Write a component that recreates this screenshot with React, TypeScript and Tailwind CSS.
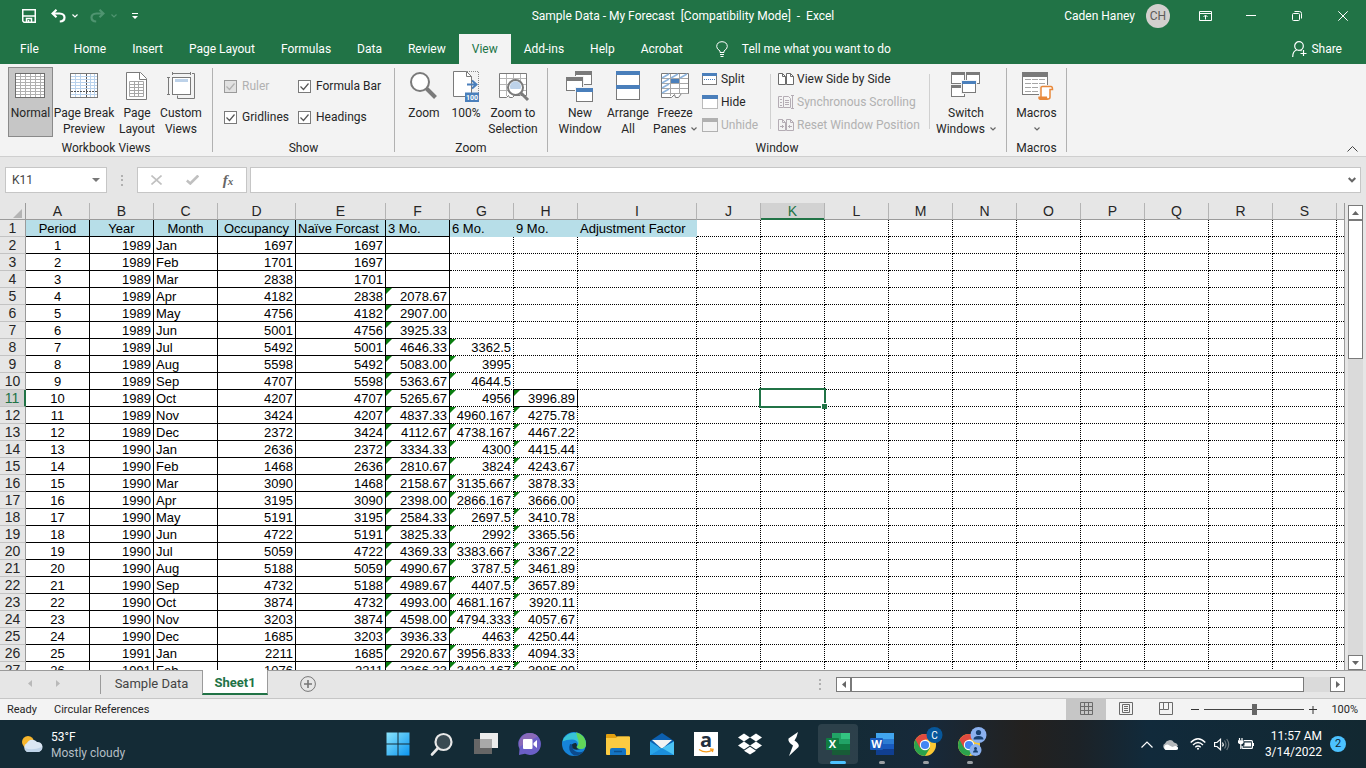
import { useState } from 'react'
import type { ReactNode } from 'react'
import clsx from 'clsx'

interface RibbonButtonProps {
  icon: ReactNode
  lines: string[]
  width: string
  active?: boolean
  menu?: boolean
}

interface DataRow {
  period: number
  year: number
  month: string
  occupancy: number
  naive: number
  avg3?: string
  avg6?: string
  avg9?: string
}

const menuTabs = ['Home', 'Insert', 'Page Layout', 'Formulas', 'Data', 'Review', 'View', 'Add-ins', 'Help', 'Acrobat']

const columns = [
  { name: 'A', width: 'w-[64px]' },
  { name: 'B', width: 'w-[64px]' },
  { name: 'C', width: 'w-[64px]' },
  { name: 'D', width: 'w-[78px]' },
  { name: 'E', width: 'w-[90px]' },
  { name: 'F', width: 'w-[64px]' },
  { name: 'G', width: 'w-[64px]' },
  { name: 'H', width: 'w-[64px]' },
  { name: 'I', width: 'w-[119px]' },
  { name: 'J', width: 'w-[64px]' },
  { name: 'K', width: 'w-[64px]' },
  { name: 'L', width: 'w-[64px]' },
  { name: 'M', width: 'w-[64px]' },
  { name: 'N', width: 'w-[64px]' },
  { name: 'O', width: 'w-[64px]' },
  { name: 'P', width: 'w-[64px]' },
  { name: 'Q', width: 'w-[64px]' },
  { name: 'R', width: 'w-[64px]' },
  { name: 'S', width: 'w-[64px]' },
  { name: '', width: '' },
]

const headings = ['Period', 'Year', 'Month', 'Occupancy', 'Naïve Forcast', '3 Mo.', '6 Mo.', '9 Mo.', 'Adjustment Factor']

const rows: DataRow[] = [
  { period: 1, year: 1989, month: 'Jan', occupancy: 1697, naive: 1697 },
  { period: 2, year: 1989, month: 'Feb', occupancy: 1701, naive: 1697 },
  { period: 3, year: 1989, month: 'Mar', occupancy: 2838, naive: 1701 },
  { period: 4, year: 1989, month: 'Apr', occupancy: 4182, naive: 2838, avg3: '2078.67' },
  { period: 5, year: 1989, month: 'May', occupancy: 4756, naive: 4182, avg3: '2907.00' },
  { period: 6, year: 1989, month: 'Jun', occupancy: 5001, naive: 4756, avg3: '3925.33' },
  { period: 7, year: 1989, month: 'Jul', occupancy: 5492, naive: 5001, avg3: '4646.33', avg6: '3362.5' },
  { period: 8, year: 1989, month: 'Aug', occupancy: 5598, naive: 5492, avg3: '5083.00', avg6: '3995' },
  { period: 9, year: 1989, month: 'Sep', occupancy: 4707, naive: 5598, avg3: '5363.67', avg6: '4644.5' },
  { period: 10, year: 1989, month: 'Oct', occupancy: 4207, naive: 4707, avg3: '5265.67', avg6: '4956', avg9: '3996.89' },
  { period: 11, year: 1989, month: 'Nov', occupancy: 3424, naive: 4207, avg3: '4837.33', avg6: '4960.167', avg9: '4275.78' },
  { period: 12, year: 1989, month: 'Dec', occupancy: 2372, naive: 3424, avg3: '4112.67', avg6: '4738.167', avg9: '4467.22' },
  { period: 13, year: 1990, month: 'Jan', occupancy: 2636, naive: 2372, avg3: '3334.33', avg6: '4300', avg9: '4415.44' },
  { period: 14, year: 1990, month: 'Feb', occupancy: 1468, naive: 2636, avg3: '2810.67', avg6: '3824', avg9: '4243.67' },
  { period: 15, year: 1990, month: 'Mar', occupancy: 3090, naive: 1468, avg3: '2158.67', avg6: '3135.667', avg9: '3878.33' },
  { period: 16, year: 1990, month: 'Apr', occupancy: 3195, naive: 3090, avg3: '2398.00', avg6: '2866.167', avg9: '3666.00' },
  { period: 17, year: 1990, month: 'May', occupancy: 5191, naive: 3195, avg3: '2584.33', avg6: '2697.5', avg9: '3410.78' },
  { period: 18, year: 1990, month: 'Jun', occupancy: 4722, naive: 5191, avg3: '3825.33', avg6: '2992', avg9: '3365.56' },
  { period: 19, year: 1990, month: 'Jul', occupancy: 5059, naive: 4722, avg3: '4369.33', avg6: '3383.667', avg9: '3367.22' },
  { period: 20, year: 1990, month: 'Aug', occupancy: 5188, naive: 5059, avg3: '4990.67', avg6: '3787.5', avg9: '3461.89' },
  { period: 21, year: 1990, month: 'Sep', occupancy: 4732, naive: 5188, avg3: '4989.67', avg6: '4407.5', avg9: '3657.89' },
  { period: 22, year: 1990, month: 'Oct', occupancy: 3874, naive: 4732, avg3: '4993.00', avg6: '4681.167', avg9: '3920.11' },
  { period: 23, year: 1990, month: 'Nov', occupancy: 3203, naive: 3874, avg3: '4598.00', avg6: '4794.333', avg9: '4057.67' },
  { period: 24, year: 1990, month: 'Dec', occupancy: 1685, naive: 3203, avg3: '3936.33', avg6: '4463', avg9: '4250.44' },
  { period: 25, year: 1991, month: 'Jan', occupancy: 2211, naive: 1685, avg3: '2920.67', avg6: '3956.833', avg9: '4094.33' },
  { period: 26, year: 1991, month: 'Feb', occupancy: 1076, naive: 2211, avg3: '2366.33', avg6: '3482.167', avg9: '3985.00' },
]

/* ---------- small shared pieces ---------- */

function Chevron({ className = '' }: { className?: string }) {
  return (
    <svg viewBox="0 0 6 4" className={clsx('w-[6px] h-[4px] shrink-0', className)} fill="none" stroke="currentColor">
      <path d="M.5.5 3 3 5.5.5" strokeWidth="1.2" />
    </svg>
  )
}

function Dots() {
  return (
    <svg viewBox="0 0 2 11" className="w-[2px] h-[11px] shrink-0" fill="#b0b0b0">
      <path d="M0 0h2v2H0zM0 4h2v2H0zM0 9h2v2H0z" />
    </svg>
  )
}

function Svg32({ children }: { children: ReactNode }) {
  return (
    <svg viewBox="0 0 32 32" className="w-8 h-8 shrink-0 overflow-visible" fill="none" aria-hidden="true">
      {children}
    </svg>
  )
}

/* ---------- ribbon icons ---------- */

const NormalIcon = () => (
  <Svg32>
    <rect x=".5" y="3.5" width="29" height="24" fill="#fff" stroke="#6d6d6d" />
    <path d="M1 6.5h28M1 9.5h28M1 12.5h28M1 15.5h28M1 18.5h28M1 21.5h28M1 24.5h28M5.5 4v23M10.5 4v23M15.5 4v23M20.5 4v23M25.5 4v23" stroke="#b0b0b0" />
  </Svg32>
)

const PageBreakIcon = () => (
  <Svg32>
    <rect x="2.5" y="3.5" width="27" height="24" fill="#fff" stroke="#7a7a7a" />
    <path d="M3 6.5h26M3 9.5h26M3 12.5h26M3 15.5h26M3 18.5h26M3 24.5h26M7.5 4v23M12.5 4v23M22.5 4v23M26.5 4v23" stroke="#b9d2ec" />
    <path d="M18.5 4v23M3 21.5h26" stroke="#555" strokeDasharray="2 1" />
  </Svg32>
)

const PageLayoutIcon = () => (
  <Svg32>
    <path d="M5.5 2.5h14l6 6v21h-20z" fill="#fff" stroke="#7a7a7a" />
    <path d="M18.5 2.5v7h7" stroke="#7a7a7a" />
    <path d="M8.5 11.5h14v15h-14zM8.5 14.5h14M8.5 17.5h14M8.5 20.5h14M8.5 23.5h14M13.5 11.5v15M17.5 11.5v15" stroke="#a6a6a6" />
  </Svg32>
)

const CustomViewsIcon = () => (
  <Svg32>
    <rect x="7.5" y="7.5" width="18" height="17" fill="#fff" stroke="#7a7a7a" />
    <rect x="10" y="9" width="13" height="3" fill="#bdd2e9" />
    <path d="M7.5 2v3M25.5 2v3M7.5 3.5h18M2 7.5h3M2 24.5h3M3.5 7.5v17M27 3.5h2.5v25h-17v-3" stroke="#7a7a7a" />
  </Svg32>
)

const ZoomIcon = () => (
  <Svg32>
    <circle cx="12" cy="12" r="9" fill="#fff" stroke="#7a7a7a" strokeWidth="2" />
    <path d="m18.5 18.5 9 9" stroke="#7a7a7a" strokeWidth="4" />
  </Svg32>
)

const HundredIcon = () => (
  <Svg32>
    <path d="M17 1.5h11.500V23" stroke="#8a8a8a" strokeDasharray="1 1" />
    <path d="M3.5 1.5h13l5 5v20h-18z" fill="#fff" stroke="#7a7a7a" />
    <path d="M16.5 1.5v5h5" stroke="#7a7a7a" />
    <path d="M17 14.5h9M22 10.5l4.500 4-4.500 4" stroke="#4a7fbb" strokeWidth="2" />
    <rect x="15" y="22.5" width="14" height="9.5" fill="#4a7fbb" />
    <text x="22" y="30" textAnchor="middle" fontSize="7" fontWeight="700" fill="#fff" fontFamily="Roboto, sans-serif">100</text>
  </Svg32>
)

const ZoomSelectionIcon = () => (
  <Svg32>
    <path d="M2.5 3.5h27v22h-12l-2 2h-3l-1-2-2 2h-7z" fill="#fff" stroke="#7a7a7a" />
    <path d="M9.5 4v22M16.5 4v22M23.5 4v22M3 8.5h26M3 14.5h26M3 20.5h26" stroke="#b4b4b4" />
    <circle cx="18.5" cy="17.5" r="7.5" fill="#fff" stroke="#7a7a7a" strokeWidth="2" />
    <path d="M13.5 19a5.500 5.500 0 1 1 10 0z" fill="#bdd2e9" />
    <path d="m24 23 7 7" stroke="#7a7a7a" strokeWidth="3" />
  </Svg32>
)

interface MiniWindowProps {
  x: number
  y: number
  w: number
  h: number
  color?: string
  bar?: number
}

function MiniWindow({ x, y, w, h, color = '#7a7a7a', bar = 4 }: MiniWindowProps) {
  return (
    <g>
      <rect x={x - 1} y={y - 1} width={w + 2} height={h + 2} fill="#f3f3f3" />
      <rect x={x + 0.5} y={y + 0.5} width={w - 1} height={h - 1} fill="#fff" stroke="#7a7a7a" />
      <rect x={x} y={y} width={w} height={bar} fill={color} />
    </g>
  )
}

const NewWindowIcon = () => (
  <Svg32>
    <MiniWindow x={11} y={1} w={17} h={14} />
    <MiniWindow x={2} y={7} w={17} h={14} />
    <MiniWindow x={12} y={18} w={17} h={14} color="#4a7fbb" />
  </Svg32>
)

const ArrangeIcon = () => (
  <Svg32>
    <rect x="4.5" y="1.5" width="23" height="28" fill="#fff" stroke="#7a7a7a" />
    <path d="M4 1h24v4H4zM4 15h24v4H4z" fill="#4a7fbb" />
  </Svg32>
)

const FreezeIcon = () => (
  <Svg32>
    <path d="M2.5 3.5h27v20h-7l-3 4h-3l-1-3-3 3h-10z" fill="#fff" stroke="#7a7a7a" />
    <path d="M11.5 4v22M20.5 4v20M3 8.5h26M3 13.5h26M3 18.5h26M3 23.5h26" stroke="#a6a6a6" />
    <path d="m3 8 7-4M12 8l7-4M21 8l7-4M3 13l7-4M3 18l7-4M3 23l7-4" stroke="#8db4dd" strokeWidth="1.5" />
    <rect x="12" y="9" width="8" height="4" fill="#4a7fbb" />
  </Svg32>
)

const SwitchIcon = () => (
  <Svg32>
    <MiniWindow x={1} y={2} w={14} h={12} bar={3} />
    <MiniWindow x={16} y={2} w={14} h={12} bar={3} />
    <MiniWindow x={1} y={15} w={14} h={12} bar={3} />
    <MiniWindow x={12} y={11} w={14} h={12} bar={3} color="#4a7fbb" />
  </Svg32>
)

const MacrosIcon = () => (
  <Svg32>
    <MiniWindow x={1} y={2} w={26} h={23} bar={5} />
    <path d="M4 9.5h6M11 9.5h6M18 9.5h6M4 13.5h6M11 13.5h6M18 13.5h6M4 17.5h6M11 17.5h6M4 21.5h6M11 21.5h6" stroke="#a6a6a6" />
    <path d="M19.5 27V16.500h11v3h-1.500V28h-9z" fill="#fff" stroke="#f3f3f3" strokeWidth="3" />
    <path d="M20 27V17.500q0-1 1.500-1H30q1.500 0 1.500 3H29V27q0 2-2 2h-8" fill="#fff" stroke="#e8883a" strokeWidth="1.5" />
    <path d="M17.5 26.5h8.500q0 3 1.500 3.500h-8.500q-2.500-1-1.500-3.500z" fill="#e8883a" />
  </Svg32>
)

const SplitIcon = () => (
  <svg viewBox="0 0 16 14" className="w-4 h-[14px] shrink-0">
    <rect x=".5" y="1.5" width="14" height="11" fill="#fff" stroke="#7a7a7a" />
    <path d="M0 1h15v3H0z" fill="#4a7fbb" />
    <path d="M2 7.5h12" stroke="#4a7fbb" strokeDasharray="1 1" />
  </svg>
)

const HideIcon = () => (
  <svg viewBox="0 0 16 14" className="w-4 h-[14px] shrink-0">
    <rect x=".5" y=".5" width="15" height="13" fill="#fff" stroke="#7a7a7a" strokeDasharray="1 1" />
    <path d="M0 0h16v4H0z" fill="#4a7fbb" />
  </svg>
)

const UnhideIcon = () => (
  <svg viewBox="0 0 16 14" className="w-4 h-[14px] shrink-0">
    <rect x=".5" y=".5" width="15" height="13" fill="#f3f3f3" stroke="#b1b1b1" />
    <path d="M0 0h16v4H0z" fill="#b1b1b1" />
  </svg>
)

const SideBySideIcon = () => (
  <svg viewBox="0 0 16 12" className="w-4 h-3 shrink-0" fill="#fff" stroke="#6a6a6a">
    <path d="M.5.5h4l3 3v8h-7zM8.5.5h4l3 3v8h-7z" />
    <path d="M4.5.5v3h3M12.5.5v3h3" fill="none" />
  </svg>
)

const SyncScrollIcon = () => (
  <svg viewBox="0 0 16 14" className="w-4 h-[14px] shrink-0" fill="none" stroke="#b4acb4">
    <path d="M4 1.5H.5v11H5M5.5 1.5h5l2 2v9h-7z" />
    <path d="M2 4.5h2M2 7.5h2M2 10.5h2M7 5.5h4M7 7.5h4M7 9.5h4M14.5.5v13M13 .5h3M13 13.5h3" />
  </svg>
)

const ResetPositionIcon = () => (
  <svg viewBox="0 0 16 12" className="w-4 h-3 shrink-0" fill="none" stroke="#b4acb4">
    <path d="M.5.5h4l3 3v8h-7zM8.5.5h4l3 3v8h-7zM4.5.5v3h3M12.5.5v3h3" />
    <path d="M2 7.5h4M4.500 6v3M10 7.5h4M11.5 6v3" />
  </svg>
)

/* ---------- title bar and tabs ---------- */

function TitleBar() {
  return (
    <div className="grid grid-cols-[1fr_auto_1fr] items-center h-[34px] pb-[3px] text-white">
      <div className="flex items-center pl-[22px]">
        <button aria-label="Save" className="mr-[15px]">
          <svg viewBox="0 0 14 14" className="w-[14px] h-[14px]" fill="none" stroke="#fff" strokeWidth="1.5">
            <path d="M.75.75h12.500v12.500H2L.75 12z" />
            <path d="M1 7h12M4.500 13v-3.500h5V13" />
            <path d="M6.500 11v2" />
          </svg>
        </button>
        <button aria-label="Undo" className="mr-[6px]">
          <svg viewBox="0 0 15 14" className="w-[15px] h-[14px]" fill="none" stroke="#fff" strokeWidth="2.200">
            <path d="M5.500.8 1.500 4.500l4 3.700M2 4.500h6.500q5 .3 5 4 0 3.800-4.700 4" />
          </svg>
        </button>
        <Chevron className="mr-[12px]" />
        <button aria-label="Redo" className="mr-[6px] text-[#4f9470]" disabled>
          <svg viewBox="0 0 15 14" className="w-[15px] h-[14px]" fill="none" stroke="currentColor" strokeWidth="2.200">
            <path d="M9.500.8l4 3.700-4 3.700M13 4.500H6.500q-5 .3-5 4 0 3.800 4.700 4" />
          </svg>
        </button>
        <Chevron className="mr-[15px] text-[#4f9470]" />
        <button aria-label="Customize Quick Access Toolbar">
          <svg viewBox="0 0 6 6" className="w-[6px] h-[6px]" fill="#fff">
            <path d="M0 0h6v1H0zM0 3h6L3 6z" />
          </svg>
        </button>
      </div>
      <h1 className="whitespace-pre">{'Sample Data - My Forecast  [Compatibility Mode]  -  Excel'}</h1>
      <div className="flex items-center justify-end">
        <span className="mr-[11px]">Caden Haney</span>
        <span className="w-6 h-6 mr-[12px] rounded-full bg-[#d2d0ce] text-[#5d5b59] flex items-center justify-center">CH</span>
        <button aria-label="Ribbon Display Options" className="w-[46px] flex justify-center">
          <svg viewBox="0 0 13 10" className="w-[13px] h-[10px]" fill="none" stroke="#fff">
            <path d="M.5.5h12v9H.5zM.5 2.500h12M6.500 8.500v-4M4.500 6l2-2 2 2" />
          </svg>
        </button>
        <button aria-label="Minimize" className="w-[46px] flex justify-center">
          <svg viewBox="0 0 10 10" className="w-[10px] h-[10px]" stroke="#fff">
            <path d="M0 4.500h10" />
          </svg>
        </button>
        <button aria-label="Restore" className="w-[46px] flex justify-center">
          <svg viewBox="0 0 10 10" className="w-[10px] h-[10px]" fill="none" stroke="#fff">
            <rect x=".5" y="2.5" width="7" height="7" rx="1" />
            <path d="M2.500.5h5q2 0 2 2v5" />
          </svg>
        </button>
        <button aria-label="Close" className="w-[46px] flex justify-center">
          <svg viewBox="0 0 10 10" className="w-[10px] h-[10px]" stroke="#fff">
            <path d="m.3.3 9.400 9.400M9.700.3.300 9.700" />
          </svg>
        </button>
      </div>
    </div>
  )
}

function TabBar() {
  const [current, setCurrent] = useState('View')
  return (
    <nav className="flex h-[30px] text-white">
      <button className="pl-5 pr-[22px]">File</button>
      {menuTabs.map((tab) => (
        <button
          key={tab}
          onClick={() => setCurrent(tab)}
          className={clsx('px-[13px]', tab === current && 'bg-[#f3f3f3] text-[#217346]')}
        >
          {tab}
        </button>
      ))}
      <button className="flex items-center gap-[14px] pl-5">
        <svg viewBox="0 0 12 16" className="w-3 h-4" fill="none" stroke="#fff">
          <path d="M4 11.500V10Q.7 8 .7 5.500.9.900 6 .7q5.100.2 5.300 4.800Q11.300 8 8 10v1.500zM4 13.500h4M4.500 15.500h3" />
        </svg>
        Tell me what you want to do
      </button>
      <button className="ml-auto pr-6 flex items-center gap-1">
        <svg viewBox="0 0 15 16" className="w-[15px] h-4" fill="none" stroke="#fff" strokeWidth="1.200">
          <circle cx="7" cy="5" r="4.300" />
          <path d="M.7 16q0-6 4-7M8.500 9.300l1 .7M11.500 9v6M8.500 12.500h6" />
        </svg>
        Share
      </button>
    </nav>
  )
}

/* ---------- ribbon ---------- */

function RibbonButton({ icon, lines, width, active, menu }: RibbonButtonProps) {
  return (
    <button
      className={clsx(
        'h-[70px] flex flex-col items-center pt-[2px] gap-[3px] border leading-4 whitespace-nowrap',
        width,
        active ? 'bg-[#c6c6c6] border-[#8a8a8a]' : 'border-transparent',
      )}
    >
      {icon}
      <span className="flex flex-col items-center">
        {lines.map((line, i) => (
          <span key={line} className="flex items-center gap-[5px]">
            {line}
            {menu && i === lines.length - 1 && lines.length > 1 && <Chevron className="text-[#666]" />}
          </span>
        ))}
        {menu && lines.length === 1 && <Chevron className="mt-[6px] text-[#666]" />}
      </span>
    </button>
  )
}

function RibbonGroup({ label, className, children }: { label: string; className?: string; children: ReactNode }) {
  return (
    <section className="flex flex-col pt-[3px]">
      <div className={clsx('flex h-[73px]', className)}>{children}</div>
      <h2 className="h-4 leading-4 text-center">{label}</h2>
    </section>
  )
}

const GroupDivider = () => <div className="w-px h-[84px] mt-1 bg-[#b1b1b1]" />
const InnerDivider = () => <div className="w-px h-[55px] mt-[7px] bg-[#d0d0d0]" />

function CheckOption({ label, disabled }: { label: string; disabled?: boolean }) {
  return (
    <label className={clsx('flex items-center gap-[5px] h-4', disabled && 'text-[#b1b1b1]')}>
      <span className="grid w-[13px] h-[13px]">
        <input
          type="checkbox"
          defaultChecked
          disabled={disabled}
          className="peer col-start-1 row-start-1 appearance-none w-[13px] h-[13px] border border-[#7a7a7a] bg-white disabled:bg-[#e1e1e1] disabled:border-[#9a9a9a]"
        />
        <svg
          viewBox="0 0 13 13"
          className="col-start-1 row-start-1 pointer-events-none hidden peer-checked:block"
          fill="none"
          stroke={disabled ? '#b1b1b1' : '#555'}
          strokeWidth="1.200"
        >
          <path d="m2.500 6.500 3 3 5-6" />
        </svg>
      </span>
      {label}
    </label>
  )
}

function SmallCommand({ icon, label, disabled }: { icon: ReactNode; label: string; disabled?: boolean }) {
  return (
    <button disabled={disabled} className={clsx('flex items-center gap-[3px] h-[23px] whitespace-nowrap', disabled && 'text-[#b1b1b1]')}>
      {icon}
      {label}
    </button>
  )
}

function Ribbon() {
  return (
    <div className="flex h-[93px] bg-[#f3f3f3] border-b border-[#cfcfcf] text-[#262626]">
      <RibbonGroup label="Workbook Views" className="pl-2 pr-[9px]">
        <RibbonButton icon={<NormalIcon />} lines={['Normal']} width="w-[45px]" active />
        <RibbonButton icon={<PageBreakIcon />} lines={['Page Break', 'Preview']} width="w-[62px]" />
        <RibbonButton icon={<PageLayoutIcon />} lines={['Page', 'Layout']} width="w-[44px]" />
        <RibbonButton icon={<CustomViewsIcon />} lines={['Custom', 'Views']} width="w-[44px]" />
      </RibbonGroup>
      <GroupDivider />
      <RibbonGroup label="Show" className="pl-[11px] w-[181px]">
        <div className="flex flex-col gap-[15px] pt-[11px] w-[74px]">
          <CheckOption label="Ruler" disabled />
          <CheckOption label="Gridlines" />
        </div>
        <div className="flex flex-col gap-[15px] pt-[11px]">
          <CheckOption label="Formula Bar" />
          <CheckOption label="Headings" />
        </div>
      </RibbonGroup>
      <GroupDivider />
      <RibbonGroup label="Zoom" className="px-[6px]">
        <RibbonButton icon={<ZoomIcon />} lines={['Zoom']} width="w-[46px]" />
        <RibbonButton icon={<HundredIcon />} lines={['100%']} width="w-[38px]" />
        <RibbonButton icon={<ZoomSelectionIcon />} lines={['Zoom to', 'Selection']} width="w-[56px]" />
      </RibbonGroup>
      <GroupDivider />
      <RibbonGroup label="Window" className="pl-2 w-[458px]">
        <RibbonButton icon={<NewWindowIcon />} lines={['New', 'Window']} width="w-[48px]" />
        <RibbonButton icon={<ArrangeIcon />} lines={['Arrange', 'All']} width="w-[48px]" />
        <RibbonButton icon={<FreezeIcon />} lines={['Freeze', 'Panes']} width="w-[46px]" menu />
        <div className="flex flex-col pl-1 w-[72px]">
          <SmallCommand icon={<SplitIcon />} label="Split" />
          <SmallCommand icon={<HideIcon />} label="Hide" />
          <SmallCommand icon={<UnhideIcon />} label="Unhide" disabled />
        </div>
        <InnerDivider />
        <div className="flex flex-col pl-[7px] w-[158px]">
          <SmallCommand icon={<SideBySideIcon />} label="View Side by Side" />
          <SmallCommand icon={<SyncScrollIcon />} label="Synchronous Scrolling" disabled />
          <SmallCommand icon={<ResetPositionIcon />} label="Reset Window Position" disabled />
        </div>
        <InnerDivider />
        <div className="pl-1">
          <RibbonButton icon={<SwitchIcon />} lines={['Switch', 'Windows']} width="w-[64px]" menu />
        </div>
      </RibbonGroup>
      <GroupDivider />
      <RibbonGroup label="Macros" className="px-[6px]">
        <RibbonButton icon={<MacrosIcon />} lines={['Macros']} width="w-[47px]" menu />
      </RibbonGroup>
      <GroupDivider />
      <button aria-label="Collapse the Ribbon" className="ml-auto mr-2 mb-1 self-end">
        <svg viewBox="0 0 11 6" className="w-[11px] h-[6px]" fill="none" stroke="#444">
          <path d="m.5 5.500 5-5 5 5" />
        </svg>
      </button>
    </div>
  )
}

/* ---------- formula bar ---------- */

function FormulaBar() {
  return (
    <div className="flex items-center h-[46px] pl-[5px] pr-[5px] text-[#444]">
      <div className="flex items-center w-[102px] h-[26px] bg-white border border-[#c6c6c6] pr-[6px]">
        <input aria-label="Name Box" defaultValue="K11" className="w-full min-w-0 pl-[6px] outline-none" />
        <svg viewBox="0 0 8 4" className="w-2 h-1 shrink-0" fill="#777">
          <path d="M0 0h8L4 4z" />
        </svg>
      </div>
      <div className="w-[30px] flex justify-center">
        <Dots />
      </div>
      <div className="flex items-center w-[110px] h-[26px] mr-[3px] bg-white border border-[#c6c6c6]">
        <button aria-label="Cancel" className="w-9 flex justify-center">
          <svg viewBox="0 0 11 10" className="w-[11px] h-[10px]" stroke="#c0c0c0" strokeWidth="1.600">
            <path d="m.5.500 10 9M10.500.5l-10 9" />
          </svg>
        </button>
        <button aria-label="Enter" className="w-9 flex justify-center">
          <svg viewBox="0 0 13 10" className="w-[13px] h-[10px]" fill="none" stroke="#c0c0c0" strokeWidth="2.600">
            <path d="m.8 5.500 3.500 3 8-8" />
          </svg>
        </button>
        <button aria-label="Insert Function" className="w-9 font-['Liberation_Serif',serif] italic font-bold text-[15px] leading-4 text-[#666]">
          f<span className="text-[11px]">x</span>
        </button>
      </div>
      <div className="flex flex-1 items-center h-[26px] bg-white border border-[#c6c6c6] pr-1">
        <input aria-label="Formula Bar" className="flex-1 px-2 outline-none" />
        <svg viewBox="0 0 8 6" className="w-2 h-[6px]" fill="none" stroke="#666" strokeWidth="2">
          <path d="m.7 1 3.300 3.300L7.300 1" />
        </svg>
      </div>
    </div>
  )
}

/* ---------- sheet ---------- */

interface CellProps {
  children?: ReactNode
  solidRight?: boolean
  solidBottom?: boolean
  align?: string
  flag?: boolean
  last?: boolean
}

function Cell({ children, solidRight, solidBottom, align = 'text-right', flag, last }: CellProps) {
  return (
    <td
      className={clsx(
        'relative p-0 px-[2px] pt-px h-[17px] leading-[15px] border-b border-black whitespace-nowrap',
        !last && 'border-r',
        !solidRight && '[border-right-style:dotted]',
        !solidBottom && '[border-bottom-style:dotted]',
        align,
      )}
    >
      {flag && (
        <svg viewBox="0 0 6 6" className="absolute left-0 top-0 w-[6px] h-[6px]" fill="#0a7d10">
          <path d="M0 0h6L0 6z" />
        </svg>
      )}
      {children}
    </td>
  )
}

function RowHeader({ n, selected }: { n: number; selected?: boolean }) {
  return (
    <th
      scope="row"
      className={clsx(
        'p-0 h-[17px] leading-4 text-[14px] font-normal text-center border-b border-b-[#c3c3c3]',
        selected ? 'bg-[#d2d2d2] text-[#217346] border-r-2 border-r-[#217346]' : 'bg-[#e6e6e6] text-[#262626] border-r border-r-[#9b9b9b]',
      )}
    >
      {n}
    </th>
  )
}

function SheetRow({ row, n }: { row: DataRow; n: number }) {
  const boxed = n === 11
  return (
    <tr>
      <RowHeader n={n} selected={n === 11} />
      <Cell solidRight solidBottom align="text-center">{row.period}</Cell>
      <Cell solidRight solidBottom>{row.year}</Cell>
      <Cell solidRight solidBottom align="text-left">{row.month}</Cell>
      <Cell solidRight solidBottom>{row.occupancy}</Cell>
      <Cell solidRight solidBottom>{row.naive}</Cell>
      <Cell solidRight solidBottom flag={!!row.avg3}>{row.avg3}</Cell>
      <Cell solidRight={boxed} flag={!!row.avg6}>{row.avg6}</Cell>
      <Cell solidRight={boxed} solidBottom={boxed || n === 10} flag={!!row.avg9}>{row.avg9}</Cell>
      {columns.slice(8).map((col, i) => (
        <Cell key={i} last={!col.name}>
          {col.name === 'K' && n === 11 && (
            <span className="absolute -top-[2px] -left-[2px] -right-[2px] -bottom-[2px] border-2 border-[#217346] z-10">
              <span className="absolute -right-[3px] -bottom-[3px] w-[6px] h-[6px] bg-[#217346] border-t border-l border-white" />
            </span>
          )}
        </Cell>
      ))}
    </tr>
  )
}

function Sheet() {
  return (
    <div className="flex flex-1 min-h-0 border-b border-[#9b9b9b]">
      <div className="flex-1 min-w-0 overflow-hidden border-r border-[#9b9b9b] bg-white">
        <table className="table-fixed w-full border-separate border-spacing-0 font-['Liberation_Sans',Arial,sans-serif] text-[13px] text-black">
          <colgroup>
            <col className="w-[26px]" />
            {columns.map((col, i) => (
              <col key={i} className={col.width} />
            ))}
          </colgroup>
          <thead>
            <tr className="bg-[#e6e6e6] text-[14px] text-[#262626]">
              <th aria-label="Select all" className="p-0 h-[17px] border-b border-r border-[#9b9b9b]">
                <svg viewBox="0 0 9 9" className="w-[9px] h-[9px] ml-auto mr-[3px] mt-1" fill="#b4b4b4">
                  <path d="M9 0v9H0z" />
                </svg>
              </th>
              {columns.map((col, i) => (
                <th
                  key={i}
                  scope="col"
                  className={clsx(
                    'p-0 h-[17px] leading-[15px] font-normal text-center border-b',
                    col.name && 'border-r border-r-[#b4b4b4]',
                    col.name === 'K'
                      ? 'bg-[#d2d2d2] text-[#217346] border-b-[#217346] shadow-[inset_0_-1px_#217346]'
                      : 'border-b-[#9b9b9b]',
                  )}
                >
                  {col.name}
                </th>
              ))}
            </tr>
          </thead>
          <tbody>
            <tr>
              <RowHeader n={1} />
              {headings.map((heading, i) => (
                <td
                  key={heading}
                  className={clsx(
                    'p-0 px-[2px] pt-px h-[17px] leading-[15px] whitespace-nowrap bg-[#b7dee8] border-r border-b',
                    i < 4 && 'text-center',
                    i < 6 ? 'border-black' : 'border-[#b7dee8]',
                  )}
                >
                  {heading}
                </td>
              ))}
              {columns.slice(9).map((col, i) => (
                <Cell key={i} last={!col.name} />
              ))}
            </tr>
            {rows.map((row, i) => (
              <SheetRow key={row.period} row={row} n={i + 2} />
            ))}
          </tbody>
        </table>
      </div>
      <div className="w-[21px] pt-[2px] pl-[3px] pr-[3px] flex flex-col bg-[#e6e6e6]">
        <button aria-label="Scroll up" className="h-[15px] flex items-center justify-center bg-white border border-[#7a7a7a]">
          <svg viewBox="0 0 7 4" className="w-[7px] h-1" fill="#666"><path d="M0 4h7L3.500 0z" /></svg>
        </button>
        <div className="flex-1 bg-[#dadada]">
          <div className="h-[139px] bg-white border border-[#7a7a7a]" />
        </div>
        <button aria-label="Scroll down" className="h-[15px] flex items-center justify-center bg-white border border-[#7a7a7a]">
          <svg viewBox="0 0 7 4" className="w-[7px] h-1" fill="#666"><path d="M0 0h7L3.500 4z" /></svg>
        </button>
      </div>
    </div>
  )
}

function SheetTabs() {
  return (
    <div className="flex h-[28px] border-b border-[#c6c6c6] bg-[#e6e6e6] text-[#444]">
      <div className="flex items-center justify-center gap-6 w-[87px] pb-[2px]">
        <svg viewBox="0 0 4 7" className="w-1 h-[7px]" fill="#b9b9b9"><path d="M4 0v7L0 3.500z" /></svg>
        <svg viewBox="0 0 4 7" className="w-1 h-[7px]" fill="#b9b9b9"><path d="M0 0v7l4-3.500z" /></svg>
      </div>
      <div className="w-px h-[19px] mt-1 ml-[13px] bg-[#9b9b9b]" />
      <button className="w-[101px] h-[25px] text-[13px]">Sample Data</button>
      <button className="-mt-px w-[66px] h-[25px] pt-[3px] text-[13px] font-bold text-[#217346] bg-white border-x border-x-[#9b9b9b] border-b-2 border-b-[#217346]">
        Sheet1
      </button>
      <button aria-label="New sheet" className="ml-8 pb-[2px]">
        <svg viewBox="0 0 16 16" className="w-4 h-4" fill="none" stroke="#777">
          <circle cx="8" cy="8" r="7.400" />
          <path d="M4 8h8M8 4v8" strokeWidth="1.600" />
        </svg>
      </button>
      <div className="ml-auto flex items-center pb-[1px]">
        <Dots />
      </div>
      <div className="flex w-[509px] h-[15px] mt-[6px] ml-[15px] mr-[21px] bg-[#dadada]">
        <button aria-label="Scroll left" className="w-[15px] flex items-center justify-center bg-white border border-[#7a7a7a]">
          <svg viewBox="0 0 4 7" className="w-1 h-[7px]" fill="#666"><path d="M4 0v7L0 3.500z" /></svg>
        </button>
        <div className="w-[453px] bg-white border border-[#7a7a7a]" />
        <button aria-label="Scroll right" className="ml-auto w-[15px] flex items-center justify-center bg-white border border-[#7a7a7a]">
          <svg viewBox="0 0 4 7" className="w-1 h-[7px]" fill="#666"><path d="M0 0v7l4-3.500z" /></svg>
        </button>
      </div>
    </div>
  )
}

function StatusBar() {
  return (
    <div className="flex items-center h-[21px] pl-[7px] pr-2 bg-[#f3f3f3] text-[11px] text-[#262626]">
      <span className="pt-[2px] mr-[17px]">Ready</span>
      <span className="pt-[2px]">Circular References</span>
      <div className="ml-auto flex self-stretch pb-[2px] text-[#6a6a6a]">
        <button aria-label="Normal view" className="w-10 -mb-[2px] pb-[2px] flex items-center justify-center bg-[#c6c6c6]">
          <svg viewBox="0 0 13 13" className="w-[13px] h-[13px]" fill="none" stroke="currentColor">
            <path d="M.5.5h12v12H.5zM4.500 0v13M8.500 0v13M0 4.500h13M0 8.500h13" />
          </svg>
        </button>
        <button aria-label="Page layout view" className="w-10 flex items-center justify-center">
          <svg viewBox="0 0 14 13" className="w-[14px] h-[13px]" fill="none" stroke="currentColor">
            <path d="M.5.5h13v12H.5zM3.500 2.500h7v8h-7zM5 4.500h4M5 6.500h4M5 8.500h4" />
          </svg>
        </button>
        <button aria-label="Page break view" className="w-10 flex items-center justify-center">
          <svg viewBox="0 0 14 13" className="w-[14px] h-[13px]" fill="none" stroke="currentColor">
            <path d="M.5.5h13v12H.5zM4.500 0v7.500h5V0M.5 7.500h4" />
          </svg>
        </button>
      </div>
      <button aria-label="Zoom out" className="ml-[5px] mr-[5px]">
        <svg viewBox="0 0 8 8" className="w-2 h-2" stroke="#333"><path d="M0 3.500h8" /></svg>
      </button>
      <input
        type="range"
        aria-label="Zoom level"
        min={0}
        max={100}
        defaultValue={50}
        className="w-[100px] h-[11px] appearance-none bg-[linear-gradient(#444,#444)] bg-[length:100%_1px] bg-center bg-no-repeat [&::-webkit-slider-thumb]:appearance-none [&::-webkit-slider-thumb]:w-[5px] [&::-webkit-slider-thumb]:h-[11px] [&::-webkit-slider-thumb]:bg-[#666]"
      />
      <button aria-label="Zoom in" className="ml-[5px] mr-[14px]">
        <svg viewBox="0 0 8 8" className="w-2 h-2" stroke="#333"><path d="M0 3.500h8M4 0v8" /></svg>
      </button>
      <span className="pt-[2px]">100%</span>
    </div>
  )
}

/* ---------- taskbar ---------- */

function AppButton({ label, children, open, active }: { label: string; children: ReactNode; open?: boolean; active?: boolean }) {
  return (
    <button
      aria-label={label}
      className={clsx('relative w-10 h-10 mx-[2px] flex items-center justify-center', active && 'rounded bg-white/10')}
    >
      <svg viewBox="0 0 24 24" className="w-6 h-6 overflow-visible">{children}</svg>
      {active && <span className="absolute bottom-0 w-4 h-[3px] rounded-full bg-[#4cc2ff]" />}
      {open && <span className="absolute bottom-0 w-[6px] h-[3px] rounded-full bg-[#9a9fa3]" />}
    </button>
  )
}

function ChromeShape() {
  return (
    <>
      <circle cx="11" cy="13" r="11" fill="#fbc934" />
      <path d="M11 13 1.500 7.500A11 11 0 0 0 11 24l5-8z" fill="#2ba24c" />
      <path d="M1.500 7.500A11 11 0 0 1 20.500 7.500H11L6 16z" fill="#e04a3f" />
      <circle cx="11" cy="13" r="5.200" fill="#fff" />
      <circle cx="11" cy="13" r="4.100" fill="#4285f4" />
    </>
  )
}

function Taskbar() {
  return (
    <footer className="grid grid-cols-[1fr_auto_1fr] items-center h-12 text-white bg-[linear-gradient(90deg,#142b36_0%,#142b36_62%,#17293a_68%,#23211f_75%,#1c2227_79%,#112a3b_84%,#122831_100%)]">
      <div className="flex items-center pl-[21px] gap-2">
        <svg viewBox="0 0 22 18" className="w-[22px] h-[18px]">
          <circle cx="7" cy="7" r="6" fill="#f7b62c" />
          <path d="M6 17a5 5 0 0 1 0-9 6 6 0 0 1 10-1 5 5 0 0 1 1 10z" fill="#dbe7f3" />
          <path d="M6 17a5 5 0 0 1-2-4q7 3 17-1-.5 4.500-4 5z" fill="#bed3e8" />
        </svg>
        <div className="flex flex-col pt-[2px] leading-4">
          <span>53°F</span>
          <span className="text-[#b5bfc5]">Mostly cloudy</span>
        </div>
      </div>
      <div className="flex pl-[2px]">
        <AppButton label="Start">
          <defs>
            <linearGradient id="win" x1="0" y1="0" x2="1" y2="1">
              <stop offset="0" stopColor="#8be4fb" />
              <stop offset="1" stopColor="#0b95f0" />
            </linearGradient>
          </defs>
          <path d="M.5.500h11v11H.5zM12.500.5h11v11h-11zM.5 12.500h11v11H.5zM12.500 12.500h11v11h-11z" fill="url(#win)" />
        </AppButton>
        <AppButton label="Search">
          <circle cx="13.500" cy="10" r="8" fill="#3a4a52" stroke="#e8e8e8" strokeWidth="2.200" />
          <path d="m8 16-6 6.500" stroke="#e8e8e8" strokeWidth="2.600" strokeLinecap="round" />
        </AppButton>
        <AppButton label="Task View">
          <rect x="0" y="7" width="18" height="15" fill="#666" />
          <rect x="6" y="1" width="18" height="15" fill="#ececec" />
          <rect x="6" y="7" width="12" height="9" fill="#a9a9a9" />
        </AppButton>
        <AppButton label="Chat">
          <path d="M12 1a11 11 0 1 1-5 20.800L1 23l.5-6A11 11 0 0 1 12 1z" fill="#6b5fc7" />
          <path d="M12 1a11 11 0 0 0-10.500 14Q8 10 20 4.500A11 11 0 0 0 12 1z" fill="#8a6ab8" />
          <rect x="5" y="7" width="9.500" height="10" rx="1" fill="#fff" />
          <path d="m15.500 11 3.500-3v8l-3.500-3z" fill="#fff" />
        </AppButton>
        <AppButton label="Edge">
          <circle cx="12" cy="12" r="12" fill="#1683d8" />
          <path d="M.5 9.500A12 12 0 0 1 24 12q0 5-5.500 5-3.500 0-4-2 2-1 1.500-3.500Q15 7.500 10 7.500 4 7.500.5 9.500z" fill="#38c3d5" />
          <path d="M14 .2A12 12 0 0 1 24 12q0 5-5.500 5-3 0-4-2 4-4 1-9z" fill="#62d558" />
          <path d="M8 12q-3 7 4 11.500 6 .5 10-4.500-5 2.500-9 0-3.500-2.500-2-6.500z" fill="#0c4a8c" />
          <path d="M10 12.500q1.500-2 4-1.500 2 2 .5 4 .5 2 4 2-6 2-8-1z" fill="#142b36" />
        </AppButton>
        <AppButton label="File Explorer">
          <path d="M0 3q0-1 1-1h7.500l2 2.500H23q1 0 1 1V10H0z" fill="#e2a010" />
          <path d="M0 6h10l1.500-1.500H23q1 0 1 1V22q0 1-1 1H1q-1 0-1-1z" fill="#fbcb42" />
          <path d="M4 23v-5q0-2 2-2h12q2 0 2 2v5z" fill="#1474c4" />
          <path d="M8 19.500h8" stroke="#0b508f" strokeWidth="1.500" />
        </AppButton>
        <AppButton label="Mail">
          <path d="M0 9 12 1l12 8v6H0z" fill="#0c5fae" />
          <path d="M2 8h20l-10 9z" fill="#f3f3f3" />
          <path d="M0 9.500 12 17l12-7.500V23H0z" fill="#2aa5e8" />
          <path d="M0 23 24 9.500V23z" fill="#4cc3f5" />
          <path d="M0 23 12 16l12 7z" fill="#1b8edb" />
        </AppButton>
        <AppButton label="Amazon">
          <rect width="24" height="24" fill="#fff" />
          <text x="12" y="15" textAnchor="middle" fontSize="20" fontWeight="700" fill="#222f3e" fontFamily="Open Sans, sans-serif">a</text>
          <path d="M5 17.500q7 4.500 13.500.5M16 17l3 .3-.7 2.700" fill="none" stroke="#f59a1b" strokeWidth="1.400" />
        </AppButton>
        <AppButton label="Dropbox">
          <path d="m6 1.500 6 4-6 4-6-4zM18 1.500l6 4-6 4-6-4zM6 9.500l6 4-6 4-6-4zM18 9.500l6 4-6 4-6-4zM12 14.800l6 3.900-6 3.800-6-3.800z" fill="#fff" />
        </AppButton>
        <AppButton label="Stride">
          <path d="M16 0 6.500 6.500q-1 3.500 4.500 7L7 24l9.500-9q1.500-3-4-6.500L14.500 5z" fill="#fff" />
        </AppButton>
        <AppButton label="Excel" active>
          <path d="M6 1h18v22H6z" fill="#185c37" />
          <path d="M6 1h9v11H6z" fill="#21a366" />
          <path d="M15 1h9v6h-9z" fill="#33c481" />
          <path d="M15 7h9v5h-9z" fill="#21a366" />
          <path d="M6 12h9v6H6zM15 12h9v6h-9z" fill="#107c41" />
          <rect x="0" y="6" width="13" height="12" rx="1" fill="#107c41" />
          <text x="6.500" y="16" textAnchor="middle" fontSize="11" fontWeight="700" fill="#fff" fontFamily="Open Sans, sans-serif">X</text>
        </AppButton>
        <AppButton label="Word" open>
          <path d="M6 1h18v6H6z" fill="#41a5ee" />
          <path d="M6 7h18v5H6z" fill="#2b7cd3" />
          <path d="M6 12h18v5H6z" fill="#185abd" />
          <path d="M6 17h18v6H6z" fill="#103f91" />
          <rect x="0" y="6" width="13" height="12" rx="1" fill="#185abd" />
          <text x="6.500" y="16" textAnchor="middle" fontSize="11" fontWeight="700" fill="#fff" fontFamily="Open Sans, sans-serif">W</text>
        </AppButton>
        <AppButton label="Chrome, profile C" open>
          <ChromeShape />
          <circle cx="20.500" cy="3" r="8" fill="#07579b" />
          <text x="20.500" y="6.500" textAnchor="middle" fontSize="10" fill="#fff" fontFamily="Roboto, sans-serif">C</text>
        </AppButton>
        <AppButton label="Chrome" open>
          <ChromeShape />
          <circle cx="20.500" cy="3" r="8" fill="#8ab0ee" />
          <circle cx="20.500" cy=".5" r="2.600" fill="#17406f" />
          <path d="M15.500 7.500q0-3.500 5-3.500t5 3.500z" fill="#17406f" />
          <circle cx="17.500" cy="18" r="6" fill="#8ab0ee" />
          <circle cx="17.500" cy="16.500" r="1.500" fill="#17406f" />
          <path d="M15 20.500q0-2.500 2.500-2.500t2.500 2.500z" fill="#17406f" />
        </AppButton>
      </div>
      <div className="flex items-center justify-end pr-5">
        <svg viewBox="0 0 12 7" className="w-3 h-[7px] mr-[9px]" fill="none" stroke="#fff" strokeWidth="1.200">
          <path d="m.5 6.500 5.500-5.500 5.500 5.500" />
        </svg>
        <svg viewBox="0 0 16 11" className="w-4 h-[11px] mr-3">
          <path d="M3 10a3 3 0 0 1 0-5.500A5 5 0 0 1 12 3.500q3 .5 4 3L8 11z" fill="#b5b9bc" />
          <path d="M3.500 11a3 3 0 0 1 0-5q2-1 4 .5l3 1.500q4-2 5.500.5.500 2.500-2 2.500z" fill="#fff" />
        </svg>
        <svg viewBox="0 0 16 12" className="w-4 h-3 mr-2" fill="none" stroke="#fff" strokeWidth="1.300">
          <path d="M.7 4.500q7.300-7.500 14.600 0M3 7q5-5 10 0M5.300 9.200q2.700-2.500 5.400 0" />
          <circle cx="8" cy="10.800" r="1" fill="#fff" stroke="none" />
        </svg>
        <svg viewBox="0 0 16 13" className="w-4 h-[13px] mr-2" fill="none" stroke="#fff" strokeWidth="1.200">
          <path d="M.6 4.500H3L6.500 1.300v10.400L3 8.500H.6z" />
          <path d="M8.500 4.500q1.500 2 0 4" />
          <path d="M10.500 2.500q3 4 0 8M12.700 1q4 5.500 0 11" stroke="#69767d" />
        </svg>
        <svg viewBox="0 0 16 13" className="w-4 h-[13px] mr-[11px]" fill="none" stroke="#fff" strokeWidth="1.200">
          <path d="M6 2.600h7.500q.9 0 .9.900v6q0 .9-.9.900H5q-.9 0-.9-.900V8M15.500 5v3" />
          <path d="M6.500 4.500H13v4H5.500V7.500h1z" fill="#fff" stroke="none" />
          <path d="M1.500 0v2.500M4 0v2.500M2.800 6v5" />
          <path d="M0 2.200h5.500v2q0 2-2.700 2T0 4.200z" fill="#fff" stroke="none" />
        </svg>
        <div className="flex flex-col items-end leading-4">
          <span>11:57 AM</span>
          <span>3/14/2022</span>
        </div>
        <span className="ml-2 w-4 h-4 rounded-full bg-[#4cc2ff] text-[#10242e] flex items-center justify-center text-[11px]">2</span>
      </div>
    </footer>
  )
}

export default function App() {
  return (
    <div className="flex flex-col h-screen overflow-hidden bg-[#e6e6e6] font-[Roboto,'Open_Sans',sans-serif] text-[12px]">
      <header className="bg-[#217346]">
        <TitleBar />
        <TabBar />
      </header>
      <Ribbon />
      <FormulaBar />
      <Sheet />
      <SheetTabs />
      <StatusBar />
      <Taskbar />
    </div>
  )
}
